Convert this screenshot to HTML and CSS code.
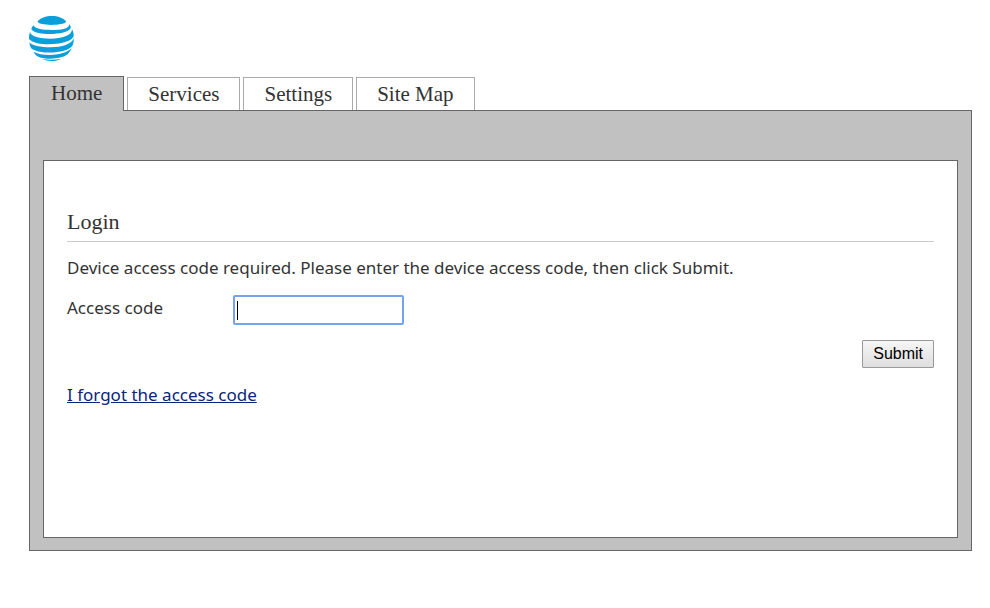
FILE: index.html
```html
<!DOCTYPE html>
<html lang="en">
<head>
  <meta charset="UTF-8">
  <meta name="viewport" content="width=device-width, initial-scale=1.0">
  <title>Login</title>
  <link rel="stylesheet" href="styles.css">
</head>
<body>
  <header class="header">
    <svg class="logo" viewBox="0 0 135 135" role="img" aria-label="AT&amp;T">
      <g fill="#0a9fdb">
        <path d="M27 14 A67 67 0 0 1 110 14 C124 30 14 32 27 14Z"/>
        <path d="M13 28 C9 33 6 38 8 41 C25 61 119 57 125 36 C126 32 124 28 121 25 C119 40 96 42 67 42 C43 42 18 39 13 28Z"/>
        <path d="M3 48 C-1 60 -1 69 2 71 C27 94 122 86 133 63 C136 55 132 45 129 40 C129 59 98 68 65 68 C32 68 7 62 3 48Z"/>
        <path d="M1 79 C2 88 5 97 9 99 C39 117 117 112 131 88 C134 80 135 73 134 67 C130 84 98 94 65 94 C34 94 9 89 1 79Z"/>
        <path d="M13 107 C19 116 23 120 28 122 C52 132 96 130 116 115 C121 109 126 103 128 97 C111 111 89 117 63 117 C41 117 24 113 13 107Z"/>
        <path d="M39 129 C56 137 80 137 97 128 C78 132 57 132 39 129Z"/>
      </g>
    </svg>
  </header>

  <nav class="tabs">
    <a class="tab active" href="#home">Home</a>
    <a class="tab" href="#services">Services</a>
    <a class="tab" href="#settings">Settings</a>
    <a class="tab" href="#sitemap">Site Map</a>
  </nav>

  <main class="panel">
    <section class="content">
      <h1>Login</h1>
      <p>Device access code required. Please enter the device access code, then click Submit.</p>
      <form class="login-form">
        <div class="field">
          <label for="password">Access code</label>
          <input type="text" id="password" name="password" autocomplete="off" autofocus>
        </div>
        <div class="buttons">
          <button type="submit">Submit</button>
        </div>
      </form>
      <a class="forgot" href="#forgot">I forgot the access code</a>
    </section>
  </main>
</body>
</html>
```
FILE: styles.css
```css
* {
  box-sizing: border-box;
}

body {
  margin: 0;
  padding: 16px 18px 16px 29px;
  background: #fff;
  color: #333;
  font-family: "Noto Sans", sans-serif;
  font-size: 17px;
  line-height: 24px;
}

.header {
  height: 60px;
}

.logo {
  display: block;
  width: 45px;
  height: 45px;
}

/* Tabs */
.tabs {
  display: flex;
  align-items: flex-end;
  gap: 3px;
}

.tab {
  height: 33px;
  padding: 0 20px;
  border: 1px solid #aaa;
  border-bottom: none;
  background: #fff;
  color: #333;
  font-family: "Liberation Serif", serif;
  font-size: 21px;
  line-height: 32px;
  text-decoration: none;
}

.tab.active {
  z-index: 1;
  height: 35px;
  margin-bottom: -1px;
  padding: 0 21px;
  border-color: #666;
  background: #c1c1c1;
}

/* Main panel */
.panel {
  padding: 49px 13px 12px;
  border: 1px solid #666;
  background: #c1c1c1;
}

.content {
  min-height: 378px;
  padding: 45px 23px;
  border: 1px solid #666;
  background: #fff;
}

h1 {
  margin: 0 0 14px;
  padding-bottom: 3px;
  border-bottom: 1px solid #ccc;
  font-family: "Liberation Serif", serif;
  font-size: 22px;
  font-weight: normal;
  line-height: 32px;
}

p {
  margin: 0 0 15px;
}

.field {
  display: flex;
  align-items: center;
}

.field label {
  width: 166px;
  padding-bottom: 4px;
}

.field input {
  width: 171px;
  height: 30px;
  padding: 1px 2px;
  border: 2px solid #74a3f0;
  border-radius: 2px;
  outline: none;
  background: #fff;
  color: #000;
  font-family: "Liberation Sans", Arial, sans-serif;
  font-size: 16px;
}

/* Caret mark at the start of the focused field */
.field input:focus {
  background: linear-gradient(#000, #000) 2px center / 1px 19px no-repeat #fff;
}

.buttons {
  display: flex;
  justify-content: flex-end;
  margin: 15px 0;
}

button {
  height: 28px;
  padding: 0 10px;
  border: 1px solid #999;
  border-radius: 1px;
  background: linear-gradient(#f6f6f6, #dedede);
  color: #000;
  font-family: "Liberation Sans", Arial, sans-serif;
  font-size: 16px;
}

.forgot {
  color: #0c2577;
}
```
